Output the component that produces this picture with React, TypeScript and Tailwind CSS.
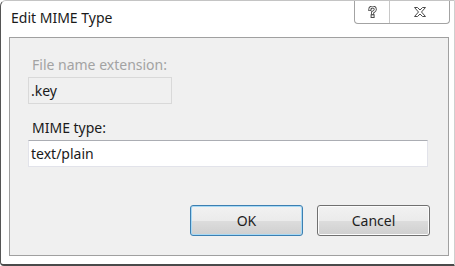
import React from 'react';

const font = { fontFamily: '"Noto Sans", "Open Sans", sans-serif' };

function HelpIcon() {
  return (
    <svg width="9" height="12" viewBox="0 0 9 12">
      <path d="M1.8 3.6 C1.8 1.8 3 1 4.5 1 C6.2 1 7.3 2 7.3 3.4 C7.3 4.8 5.9 5.3 4.6 6.3 L4.6 7.6" fill="none" stroke="#4a4a4a" strokeWidth="3" strokeLinecap="square" />
      <path d="M1.8 3.6 C1.8 1.8 3 1 4.5 1 C6.2 1 7.3 2 7.3 3.4 C7.3 4.8 5.9 5.3 4.6 6.3 L4.6 7.6" fill="none" stroke="#ffffff" strokeWidth="1.2" strokeLinecap="square" />
      <rect x="3.1" y="8.8" width="3" height="2.7" fill="#ffffff" stroke="#4a4a4a" strokeWidth="1" />
    </svg>
  );
}

function CloseIcon() {
  return (
    <svg width="12" height="10" viewBox="0 0 12 10">
      <polygon
        points="0.5,0.5 3.5,0.5 6,3 8.5,0.5 11.5,0.5 7.5,5 11.5,9.5 8.5,9.5 6,7 3.5,9.5 0.5,9.5 4.5,5"
        fill="#ffffff"
        stroke="#4a4a4a"
        strokeWidth="1"
        strokeLinejoin="round"
      />
    </svg>
  );
}

function Win7Button({ label, isDefault }: { label: string; isDefault?: boolean }) {
  return (
    <button
      className={`w-[113px] h-[31px] rounded-[3px] border text-[14px] text-[#1e1e1e] bg-[linear-gradient(to_bottom,#f2f2f2_0%,#ebebeb_50%,#dddddd_50%,#cfcfcf_100%)] ${
        isDefault
          ? 'border-[#3c7fb1] shadow-[inset_0_0_0_1px_#a7d9f5]'
          : 'border-[#707070] shadow-[inset_0_0_0_1px_#fcfcfc]'
      }`}
      style={font}
    >
      {label}
    </button>
  );
}

export default function App() {
  return (
    <div
      className="w-[455px] h-[266px] bg-white border-l border-b-2 border-l-[#555555] border-b-[#4a4a4a] border-t border-t-[#c4c4c4] border-r border-r-[#cfcfcf] rounded-tl-[6px] rounded-bl-[4px] flex flex-col overflow-hidden"
      style={font}
    >
      {/* Title bar */}
      <div className="h-[36px] flex items-start justify-between">
        <div className="pl-[10px] pt-[7px] text-[14px] leading-[20px] text-[#1a1a1a]">Edit MIME Type</div>
        <div className="flex mt-[-1px] mr-[4px] h-[24px] border border-t-0 border-[#a3a3a3] rounded-b-[4px] bg-white">
          <div className="w-[35px] flex items-center justify-center border-r border-[#c8c8c8]">
            <HelpIcon />
          </div>
          <div className="w-[59px] flex items-center justify-center">
            <CloseIcon />
          </div>
        </div>
      </div>

      {/* Content panel */}
      <div className="ml-[8px] w-[440px] h-[219px] bg-[#f0f0f0] border border-[#a0a0a0] px-[18px] pt-[17px] flex flex-col">
        <div className="pl-[4px] text-[14px] leading-[19px] text-[#a3a3a3]">File name extension:</div>
        <div className="mt-[3px] w-[144px] h-[27px] border border-[#d9d9d9] bg-[#f0f0f0] pl-[2px] flex items-center text-[14px] text-[#1a1a1a]">
          .key
        </div>
        <div className="mt-[14px] pl-[4px] text-[14px] leading-[19px] text-[#1a1a1a]">MIME type:</div>
        <div className="mt-[3px] w-[400px] h-[27px] border border-[#e2e3ea] border-t-[#abadb3] bg-white pl-[2px] flex items-center text-[14px] text-[#1a1a1a]">
          text/plain
        </div>
        <div className="mt-[38px] flex justify-end gap-[14px]">
          <Win7Button label="OK" isDefault />
          <Win7Button label="Cancel" />
        </div>
      </div>
    </div>
  );
}
